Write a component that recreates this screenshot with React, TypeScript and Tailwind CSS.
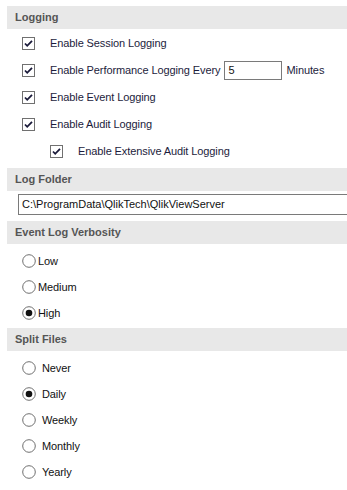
import React from "react";

const font = { fontFamily: "'Liberation Sans', Arial, sans-serif" };

function Check() {
  return (
    <svg width="13" height="13" viewBox="0 0 13 13" className="shrink-0">
      <rect x="0.5" y="0.5" width="12" height="12" fill="#fff" stroke="#707070" />
      <path d="M3 6.5 L5.2 8.8 L10 3.8" fill="none" stroke="#1a1a3a" strokeWidth="1.8" />
    </svg>
  );
}

function Radio({ on }: { on?: boolean }) {
  return (
    <svg width="14" height="14" viewBox="0 0 14 14" className="shrink-0">
      <circle cx="7" cy="7" r="6.3" fill="#fff" stroke="#6f6f6f" />
      {on && <circle cx="7" cy="7" r="3.3" fill="#111" />}
    </svg>
  );
}

function Header({ children }: { children: React.ReactNode }) {
  return (
    <div className="ml-[7px] h-[23px] bg-[#e8e8e8] flex items-center pl-[8px] text-[11px] font-bold text-[#555]">
      {children}
    </div>
  );
}

function CheckRow({ label, indent, children }: { label: string; indent?: boolean; children?: React.ReactNode }) {
  return (
    <div className={`h-[27px] flex items-center ${indent ? "pl-[50px]" : "pl-[22px]"}`}>
      <Check />
      <span className="ml-[15px] text-[11px] tracking-[-0.1px] text-[#1c1c3c] whitespace-nowrap">{label}</span>
      {children}
    </div>
  );
}

function RadioRow({ label, on, gap }: { label: string; on?: boolean; gap: string }) {
  return (
    <div className="h-[26px] flex items-center pl-[22px]">
      <Radio on={on} />
      <span className={`${gap} text-[11px] tracking-[-0.1px] text-[#111]`}>{label}</span>
    </div>
  );
}

export default function App() {
  return (
    <div className="w-[347px] h-[490px] bg-white overflow-hidden" style={font}>
      <div className="pt-[6px]">
        <Header>Logging</Header>
        <div className="pt-[1px]">
          <CheckRow label="Enable Session Logging" />
          <CheckRow label="Enable Performance Logging Every">
            <div className="ml-[4px] w-[58px] h-[19px] border border-[#7a7a7a] text-[11px] text-[#111] pl-[3px] flex items-center">5</div>
            <span className="ml-[4px] text-[11px] tracking-[-0.1px] text-[#1c1c3c]">Minutes</span>
          </CheckRow>
          <CheckRow label="Enable Event Logging" />
          <CheckRow label="Enable Audit Logging" />
          <CheckRow label="Enable Extensive Audit Logging" indent />
        </div>
        <div className="mt-[3px]">
          <Header>Log Folder</Header>
        </div>
        <div className="ml-[18px] mt-[3px] h-[21px] border border-[#7a7a7a] border-r-0 flex items-center pl-[3px] text-[11px] text-[#111]">
          C:\ProgramData\QlikTech\QlikViewServer
        </div>
        <div className="mt-[6px]">
          <Header>Event Log Verbosity</Header>
        </div>
        <div className="pt-[4px]">
          <RadioRow label="Low" gap="ml-[2px]" />
          <RadioRow label="Medium" gap="ml-[2px]" />
          <RadioRow label="High" on gap="ml-[2px]" />
        </div>
        <div className="mt-[2px]">
          <Header>Split Files</Header>
        </div>
        <div className="pt-[4px]">
          <RadioRow label="Never" gap="ml-[6px]" />
          <RadioRow label="Daily" on gap="ml-[6px]" />
          <RadioRow label="Weekly" gap="ml-[6px]" />
          <RadioRow label="Monthly" gap="ml-[6px]" />
          <RadioRow label="Yearly" gap="ml-[6px]" />
        </div>
      </div>
    </div>
  );
}
